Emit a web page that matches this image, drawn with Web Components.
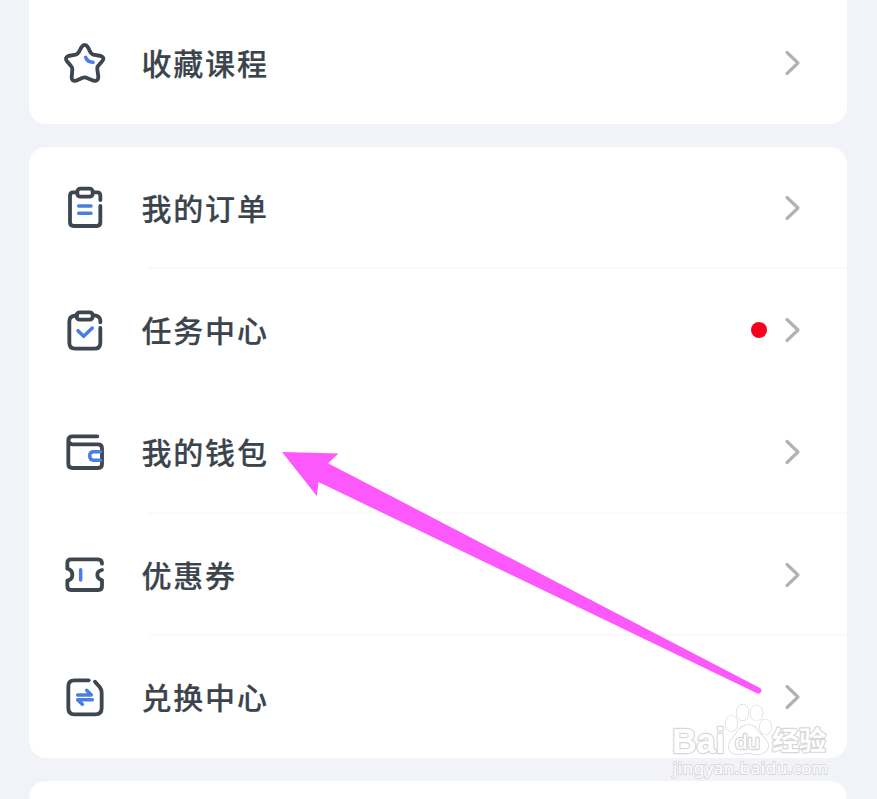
<!DOCTYPE html>
<html lang="zh-CN">
<head>
<meta charset="utf-8">
<title>我的</title>
<style>
html,body{margin:0;height:100%;overflow:hidden;background:#f2f3f9}
body{font-family:"Noto Sans CJK SC","Noto Sans",sans-serif;color:#3b444c}
</style>
</head>
<body>
<profile-page></profile-page>
<script>
const icons = {
  star: `<path d="M94 52Q104 37 114 52L122 68Q125 72 130 74L153 78Q165 83 157 93L144 108Q141 112 142 118L145 141Q144 155 131 152L109 143Q103 141 98 143L78 152Q65 155 65 142L67 118Q67 112 63 108L51 94Q43 83 55 78L77 74Q83 72 86 67Z"/><path class="b" d="M107 82Q112 96 129 97"/>`,
  order: `<path d="M80 52H70Q60 52 60 62V142Q60 153 71 153H140Q151 153 151 142V93M151 75V62Q151 52 141 52H131"/><rect x="82" y="41" width="46" height="24" rx="9"/><path class="b" d="M86 93H123M86 115H123"/>`,
  task: `<path d="M81 56H75Q58 58 58 73V138Q58 155 76 155H133Q151 155 151 137V93M151 76V70Q149 57 135 55"/><rect x="80" y="46" width="48" height="22" rx="9"/><path class="b" d="M84 101L101 118L127 93"/>`,
  wallet: `<path d="M142 52H68Q55 52 55 64V135Q55 147 68 147H144Q156 147 156 135V88Q156 76 144 76H68Q56 75 55 64"/><path class="b" d="M152 98H131Q119 98 119 110Q119 123 131 124H152"/>`,
  coupon: `<path d="M156 65Q156 52 143 52H63Q52 52 52 63V80Q67 84 67 98Q67 112 52 116V133Q52 144 63 144H145Q156 144 156 133V114Q142 111 142 98Q142 87 156 84"/><path class="b" d="M92 83V114"/>`,
  swap: `<path d="M116 49H73Q55 49 55 67V132Q55 151 73 151H136Q155 151 155 132V85Q155 77 149 69L135 53"/><path class="b" d="M83 93H124L110 79M127 107H83L97 121"/>`
};

class LineIcon extends HTMLElement {
  connectedCallback() {
    this.attachShadow({mode:'open'}).innerHTML = `<style>
:host{display:block;width:48px;height:48px;flex:none}
svg{display:block;fill:none;stroke:#3e474f;stroke-width:11.5;stroke-linecap:round;stroke-linejoin:round}
.b{stroke:#4a7fe0;stroke-width:10.5}
</style><svg width="48" height="48" viewBox="33 27 144 144">${icons[this.getAttribute('name')]}</svg>`;
  }
}
customElements.define('line-icon', LineIcon);

class MenuRow extends HTMLElement {
  connectedCallback() {
    const dot = this.hasAttribute('dot') ? '<i class="dot"></i>' : '<i></i>';
    this.attachShadow({mode:'open'}).innerHTML = `<style>
:host{display:grid;grid-template-columns:48px 1fr auto auto;align-items:center;height:122.2px;box-sizing:border-box;padding:0 45.5px 0 32px;
 background:linear-gradient(#fafafb,#fafafb) 119px 100%/var(--line,0) 2px no-repeat}
:host([line]){--line:100%}
.label{padding:0 0 2px 32.5px;font-size:30px;line-height:44px;letter-spacing:1.8px;font-weight:500;white-space:nowrap;-webkit-text-stroke:.2px}
.dot{width:16px;height:16px;border-radius:50%;background:#f5001d;margin-right:16.5px}
.chev{display:block;fill:none;stroke:#b0b3b6;stroke-width:3.2;stroke-linecap:round;stroke-linejoin:round}
</style><line-icon name="${this.getAttribute('icon')}"></line-icon><span class="label"><slot></slot></span>${dot}<svg class="chev" width="18" height="28" viewBox="0 0 18 28"><path d="M3 3.5L14 14L3 24.5"/></svg>`;
  }
}
customElements.define('menu-row', MenuRow);

class MenuCard extends HTMLElement {
  connectedCallback() {
    this.attachShadow({mode:'open'}).innerHTML = `<style>
:host{display:block;background:#fff;border-radius:17px;overflow:hidden;flex:none}
</style><slot></slot>`;
  }
}
customElements.define('menu-card', MenuCard);

class PointerArrow extends HTMLElement {
  connectedCallback() {
    this.attachShadow({mode:'open'}).innerHTML = `<style>
:host{position:absolute;left:282px;top:450px;width:482px;height:246px}
svg{display:block}
</style><svg width="482" height="246" viewBox="282 450 482 246" fill="#fd58fb"><path d="M282 452L338.5 453.5L328 463.2L759.5 687.7A3 3 0 0 1 757 693.3L318.5 482L316.8 496Z"/></svg>`;
  }
}
customElements.define('pointer-arrow', PointerArrow);

class SiteMark extends HTMLElement {
  connectedCallback() {
    this.attachShadow({mode:'open'}).innerHTML = `<style>
:host{position:absolute;left:660px;top:695px;width:180px;height:90px}
svg{display:block}
text,.paw{fill:#fff;stroke:#d6d7da;stroke-width:2.4;paint-order:stroke;stroke-linejoin:round}
.paw{stroke-width:1.3}
.lat{font-family:"Liberation Sans",sans-serif}
</style><svg width="180" height="90" viewBox="660 695 180 90">
<text class="lat" x="672" y="753" font-size="35" font-weight="700" textLength="53" lengthAdjust="spacingAndGlyphs">Bai</text>
<g class="paw"><ellipse cx="731.5" cy="723.5" rx="6" ry="7.7"/><ellipse cx="742.5" cy="712.5" rx="6" ry="8"/><ellipse cx="756.5" cy="713" rx="6.2" ry="7.7"/><ellipse cx="765.5" cy="727" rx="5.8" ry="7.7"/>
<path d="M748 725Q754 724 758 731Q762 736 766 740Q771 747 765 752Q761 755 755 754Q748 752 741 754Q732 756 729 749Q728 743 733 738L738 731Q742 725 748 725Z"/></g>
<text class="lat" x="735" y="749" font-size="21" textLength="25" lengthAdjust="spacingAndGlyphs">du</text>
<text x="772" y="750" font-size="26" font-weight="700" textLength="54" lengthAdjust="spacingAndGlyphs" font-family="Noto Sans CJK SC, sans-serif">经验</text>
<text x="673" y="773.5" font-size="17" textLength="155" font-family="Noto Sans, sans-serif" style="stroke-width:1.8">jingyan.baidu.com</text>
</svg>`;
  }
}
customElements.define('site-mark', SiteMark);

class ProfilePage extends HTMLElement {
  connectedCallback() {
    this.attachShadow({mode:'open'}).innerHTML = `<style>
:host{display:flex;flex-direction:column;gap:23px;position:relative;width:877px;height:799px;box-sizing:border-box;padding:0 30px 0 29px;overflow:hidden}
.first{border-radius:0 0 17px 17px;padding-top:1.8px}
.next{height:60px}
</style>
<menu-card class="first"><menu-row icon="star">收藏课程</menu-row></menu-card>
<menu-card>
<menu-row icon="order" line>我的订单</menu-row>
<menu-row icon="task" dot>任务中心</menu-row>
<menu-row icon="wallet" line>我的钱包</menu-row>
<menu-row icon="coupon" line>优惠券</menu-row>
<menu-row icon="swap">兑换中心</menu-row>
</menu-card>
<menu-card class="next"></menu-card>
<pointer-arrow></pointer-arrow>
<site-mark></site-mark>`;
  }
}
customElements.define('profile-page', ProfilePage);
</script>
</body>
</html>
